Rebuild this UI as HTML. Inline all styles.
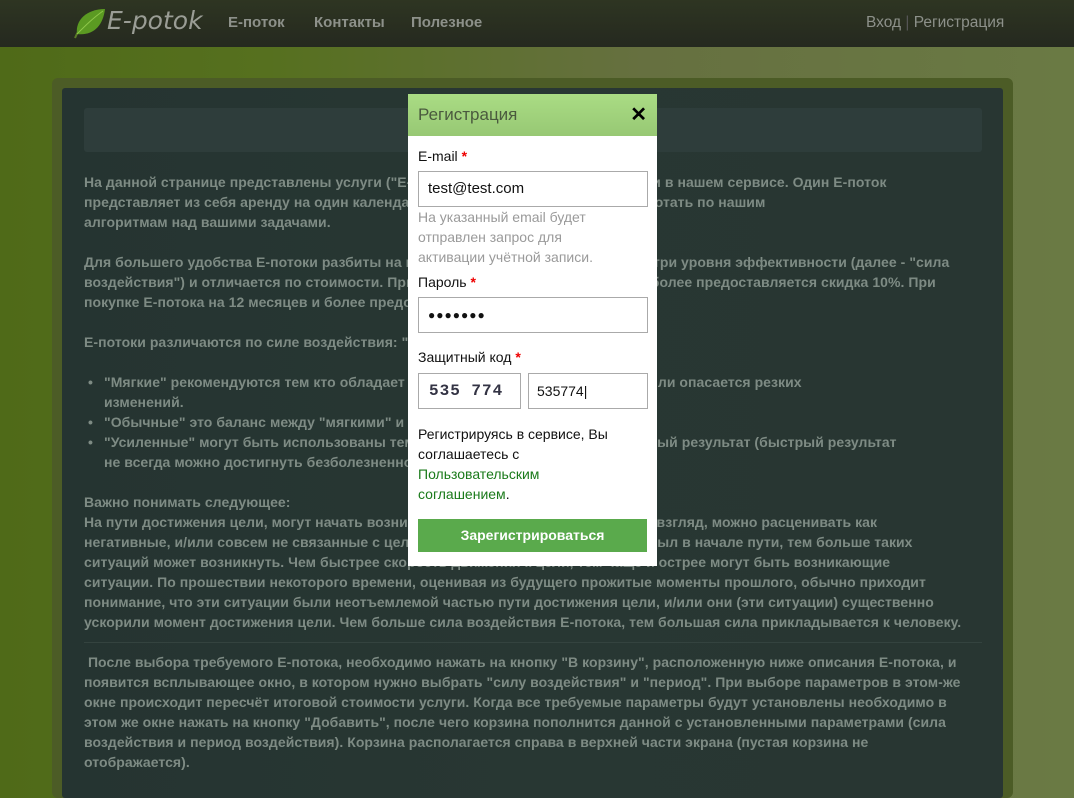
<!DOCTYPE html>
<html><head><meta charset="utf-8"><style>
*{margin:0;padding:0;box-sizing:border-box}
body{width:1074px;height:784px;overflow:hidden;position:relative;font-family:"Liberation Sans",sans-serif;background:linear-gradient(90deg,#4f6a18 0%,#56701f 25%,#667040 60%,#6a7a44 100%)}
.top{position:absolute;left:0;top:0;width:1074px;height:47px;background:linear-gradient(#2e3522,#25291f)}
.nav{position:absolute;top:14px;font-size:15px;color:#8d918a;font-weight:bold;white-space:nowrap}
.logo{position:absolute;left:107px;top:6px;font-family:"DejaVu Sans",sans-serif;font-style:italic;font-size:25px;color:#9a9d95}
.outer{position:absolute;left:52px;top:78px;width:961px;height:720px;background:#4c5c26;border-radius:6px}
.inner{position:absolute;left:62px;top:88px;width:941px;height:710px;background:linear-gradient(90deg,#253431,#283733 50%,#283632);border-radius:3px}
.hbar{position:absolute;left:84px;top:108px;width:898px;height:44px;background:#2e3d3b;border-radius:3px}
.txt{position:absolute;left:84px;top:172px;font-size:14px;line-height:20px;color:#7e8b84;font-weight:bold;white-space:nowrap;letter-spacing:0.05px}
.txt ul{margin-left:20px;list-style:none}
.txt li:before{content:"•";position:absolute;left:4px}
.hr{position:absolute;left:84px;top:642px;width:898px;height:1px;background:#34433f}
.modal{position:absolute;left:408px;top:94px;width:249px;height:472px;background:#fff}
.mh{height:42px;background:linear-gradient(#aadc84,#97c874);padding:11px 10px;font-size:17px;color:#4a5a3e}
.x{position:absolute;right:10px;top:8px;font-size:20px;font-weight:bold;color:#000}
.lbl{position:absolute;left:10px;font-size:14px;color:#111;white-space:nowrap}
.lbl b{color:#e00;font-weight:bold}
.inp{position:absolute;border:1px solid #aaa;background:#fff;font-size:15px;color:#111;padding:0 9px;line-height:34px;height:36px;white-space:nowrap;overflow:hidden}
.hint{position:absolute;left:10px;top:113px;font-size:14px;line-height:20px;color:#9a9a9a}
.btn{position:absolute;left:10px;top:425px;width:229px;height:33px;background:#5aaa4c;color:#fff;font-weight:bold;font-size:14px;text-align:center;line-height:33px}
</style></head><body>
<div class="top">
<svg style="position:absolute;left:71px;top:6px" width="36" height="34" viewBox="0 0 36 34"><path d="M4 32 C8 22 14 16 22 12" stroke="#5a7a28" stroke-width="2" fill="none"/><path d="M6 28 C4 14 16 3 34 3 C32 20 22 30 6 28Z" fill="#5b9a22"/><path d="M6 28 C14 20 22 12 32 5" stroke="#8fc84a" stroke-width="1" fill="none"/></svg>
<div class="logo">E-potok</div>
<div class="nav" style="left:228px">E-поток</div>
<div class="nav" style="left:314px">Контакты</div>
<div class="nav" style="left:411px">Полезное</div>
<div class="nav" style="left:866px;font-weight:normal;font-size:15.5px">Вход <span style="color:#555">|</span> Регистрация</div>
</div>
<div class="outer"></div><div class="inner"></div><div class="hbar"></div>
<div class="txt">
На данной странице представлены услуги ("E-поток") для улучшения успешности в нашем сервисе. Один E-поток<br>
представляет из себя аренду на один календарный месяц ПО, которое будет работать по нашим<br>
алгоритмам над вашими задачами.<br><br>
Для большего удобства E-потоки разбиты на категории и каждый E-поток имеет три уровня эффективности (далее - "сила<br>
воздействия") и отличается по стоимости. При покупке E-потока на 6 месяцев и более предоставляется скидка 10%. При<br>
покупке E-потока на 12 месяцев и более предоставляется скидка 20%.<br><br>
E-потоки различаются по силе воздействия: "Мягкие", "Обычные", "Усиленные".<br><br>
<ul><li>"Мягкие" рекомендуются тем кто обладает повышенной чувствительностью или опасается резких<br>изменений.</li>
<li>"Обычные" это баланс между "мягкими" и "усиленными".</li>
<li>"Усиленные" могут быть использованы теми, кому важен максимально быстрый результат (быстрый результат<br>не всегда можно достигнуть безболезненно).</li></ul><br>
Важно понимать следующее:<br>
На пути достижения цели, могут начать возникать ситуации, которые на первый взгляд, можно расценивать как<br>
негативные, и/или совсем не связанные с целью. Чем дальше цель от того, кто был в начале пути, тем больше таких<br>
ситуаций может возникнуть. Чем быстрее скорость движения к цели, тем чаще и острее могут быть возникающие<br>
ситуации. По прошествии некоторого времени, оценивая из будущего прожитые моменты прошлого, обычно приходит<br>
понимание, что эти ситуации были неотъемлемой частью пути достижения цели, и/или они (эти ситуации) существенно<br>
ускорили момент достижения цели. Чем больше сила воздействия E-потока, тем большая сила прикладывается к человеку.<br><br>
&nbsp;После выбора требуемого E-потока, необходимо нажать на кнопку "В корзину", расположенную ниже описания E-потока, и<br>
появится всплывающее окно, в котором нужно выбрать "силу воздействия" и "период". При выборе параметров в этом-же<br>
окне происходит пересчёт итоговой стоимости услуги. Когда все требуемые параметры будут установлены необходимо в<br>
этом же окне нажать на кнопку "Добавить", после чего корзина пополнится данной с установленными параметрами (сила<br>
воздействия и период воздействия). Корзина располагается справа в верхней части экрана (пустая корзина не<br>
отображается).
</div>
<div class="hr"></div>
<div class="modal">
<div class="mh">Регистрация</div><div class="x">✕</div>
<div class="lbl" style="top:54px">E-mail <b>*</b></div>
<div class="inp" style="left:10px;top:77px;width:230px">test@test.com</div>
<div class="hint">На указанный email будет<br>отправлен запрос для<br>активации учётной записи.</div>
<div class="lbl" style="top:180px">Пароль <b>*</b></div>
<div class="inp" style="left:10px;top:203px;width:230px;font-size:12px;letter-spacing:1px">●●●●●●●</div>
<div class="lbl" style="top:255px">Защитный код <b>*</b></div>
<div class="inp" style="left:10px;top:279px;width:103px;font-family:'Liberation Mono',monospace;font-size:16px;color:#334;letter-spacing:1px;font-weight:bold;padding-left:10px">535 774</div>
<div class="inp" style="left:120px;top:279px;width:120px;font-size:14px;padding-left:8px">535774|</div>
<div class="lbl" style="top:330px;line-height:20px">Регистрируясь в сервисе, Вы<br>соглашаетесь с<br><span style="color:#1a7a1a">Пользовательским<br>соглашением</span>.</div>
<div class="btn">Зарегистрироваться</div>
</div>
</body></html>
